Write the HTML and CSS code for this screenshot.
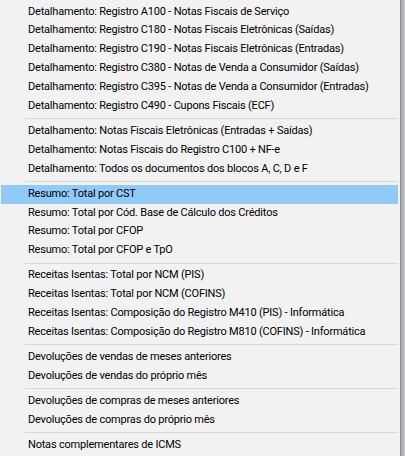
FILE: index.html
```html
<!DOCTYPE html>
<html lang="pt-BR">
<head>
<meta charset="utf-8">
<title>Menu</title>
<link rel="stylesheet" href="styles.css">
</head>
<body>
<div class="screen">
  <ul class="menu">
    <li class="item">Detalhamento: Registro A100 - Notas Fiscais de Serviço</li>
    <li class="item">Detalhamento: Registro C180 - Notas Fiscais Eletrônicas (Saídas)</li>
    <li class="item">Detalhamento: Registro C190 - Notas Fiscais Eletrônicas (Entradas)</li>
    <li class="item">Detalhamento: Registro C380 - Notas de Venda a Consumidor (Saídas)</li>
    <li class="item">Detalhamento: Registro C395 - Notas de Venda a Consumidor (Entradas)</li>
    <li class="item">Detalhamento: Registro C490 - Cupons Fiscais (ECF)</li>
    <li class="sep"></li>
    <li class="item">Detalhamento: Notas Fiscais Eletrônicas (Entradas + Saídas)</li>
    <li class="item">Detalhamento: Notas Fiscais do Registro C100 + NF-e</li>
    <li class="item">Detalhamento: Todos os documentos dos blocos A, C, D e F</li>
    <li class="sep"></li>
    <li class="item active">Resumo: Total por CST</li>
    <li class="item">Resumo: Total por Cód. Base de Cálculo dos Créditos</li>
    <li class="item">Resumo: Total por CFOP</li>
    <li class="item">Resumo: Total por CFOP e TpO</li>
    <li class="sep"></li>
    <li class="item">Receitas Isentas: Total por NCM (PIS)</li>
    <li class="item">Receitas Isentas: Total por NCM (COFINS)</li>
    <li class="item">Receitas Isentas: Composição do Registro M410 (PIS) - Informática</li>
    <li class="item">Receitas Isentas: Composição do Registro M810 (COFINS) - Informática</li>
    <li class="sep"></li>
    <li class="item">Devoluções de vendas de meses anteriores</li>
    <li class="item">Devoluções de vendas do próprio mês</li>
    <li class="sep"></li>
    <li class="item">Devoluções de compras de meses anteriores</li>
    <li class="item">Devoluções de compras do próprio mês</li>
    <li class="sep"></li>
    <li class="item">Notas complementares de ICMS</li>
  </ul>
  <div class="backdrop"></div>
</div>
</body>
</html>
```
FILE: styles.css
```css
html, body {
  margin: 0;
  padding: 0;
  height: 100%;
  background: #f2f2f2;
}
.screen {
  display: flex;
  height: 456px;
  width: 405px;
  overflow: hidden;
}
.menu {
  list-style: none;
  margin: 0;
  padding: 2.5px 0 0 0;
  width: 400px;
  flex: none;
  background: #f2f2f2;
  border-right: 1px solid #8e8e8e;
  font-family: Roboto, "Noto Sans", sans-serif;
  font-size: 11px;
  letter-spacing: -0.2px;
  color: #000;
}
.item {
  height: 18.85px;
  line-height: 18.85px;
  margin: 0 2px 0 1px;
  padding-left: 27px;
  white-space: nowrap;
}
.item.active {
  background: #91c9f7;
}
.sep {
  height: 6.3px;
  position: relative;
}
.sep::after {
  content: "";
  position: absolute;
  left: 25px;
  right: 2px;
  top: 2.5px;
  height: 1px;
  background: #d7d7d7;
}
.backdrop {
  flex: 1;
  background: linear-gradient(to right, #a8a8a8, #c4c7cc);
}
```
